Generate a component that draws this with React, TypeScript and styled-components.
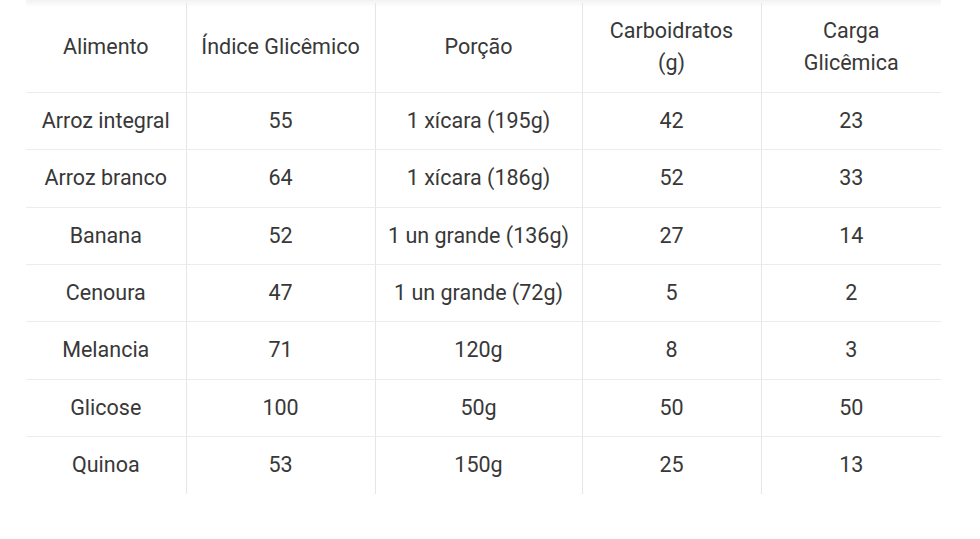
import React from "react";
import styled, { createGlobalStyle } from "styled-components";

const rows = [
  { food: "Arroz integral", gi: "55", portion: "1 xícara (195g)", carbs: "42", load: "23" },
  { food: "Arroz branco", gi: "64", portion: "1 xícara (186g)", carbs: "52", load: "33" },
  { food: "Banana", gi: "52", portion: "1 un grande (136g)", carbs: "27", load: "14" },
  { food: "Cenoura", gi: "47", portion: "1 un grande (72g)", carbs: "5", load: "2" },
  { food: "Melancia", gi: "71", portion: "120g", carbs: "8", load: "3" },
  { food: "Glicose", gi: "100", portion: "50g", carbs: "50", load: "50" },
  { food: "Quinoa", gi: "53", portion: "150g", carbs: "25", load: "13" },
];

const widths = [160, 189, 207, 179, 180];

export default function App() {
  return (
    <>
      <GlobalStyle />
      <Page>
        <Wrapper>
          <Table>
            <colgroup>
              {widths.map((w, i) => (
                <col key={i} style={{ width: w }} />
              ))}
            </colgroup>
            <thead>
              <tr>
                <Th>Alimento</Th>
                <Th>Índice Glicêmico</Th>
                <Th>Porção</Th>
                <Th>
                  Carboidratos
                  <br />
                  (g)
                </Th>
                <Th>
                  Carga
                  <br />
                  Glicêmica
                </Th>
              </tr>
            </thead>
            <tbody>
              {rows.map((r) => (
                <Row key={r.food}>
                  <Td>{r.food}</Td>
                  <Td>{r.gi}</Td>
                  <Td>{r.portion}</Td>
                  <Td>{r.carbs}</Td>
                  <Td>{r.load}</Td>
                </Row>
              ))}
            </tbody>
          </Table>
        </Wrapper>
      </Page>
    </>
  );
}

const GlobalStyle = createGlobalStyle`
  body {
    margin: 0;
    background: #fff;
    font-family: Roboto, "Liberation Sans", sans-serif;
  }
`;

const Page = styled.div`
  width: 980px;
  height: 539px;
  padding: 0 39px 0 26px;
  box-sizing: border-box;
`;

const Wrapper = styled.div`
  width: 915px;
  padding-top: 3px;
  background: linear-gradient(to bottom, rgba(0, 0, 0, 0.05), rgba(0, 0, 0, 0) 7px);
`;

const Table = styled.table`
  width: 915px;
  border-collapse: collapse;
  table-layout: fixed;
  background: transparent;
  color: #383838;
  font-size: 21.5px;
  line-height: 32.4px;
`;

const Th = styled.th`
  font-weight: 400;
  text-align: center;
  padding: 12px 4px;
  height: 88px;
  box-sizing: border-box;
  border-bottom: 1px solid #ececec;
  border-left: 1px solid #e6e6e6;
  &:first-child {
    border-left: none;
  }
`;

const Row = styled.tr`
  &:last-child td {
    border-bottom: none;
  }
`;

const Td = styled.td`
  text-align: center;
  padding: 12px 4px;
  white-space: nowrap;
  border-bottom: 1px solid #ececec;
  border-left: 1px solid #e6e6e6;
  &:first-child {
    border-left: none;
  }
`;
